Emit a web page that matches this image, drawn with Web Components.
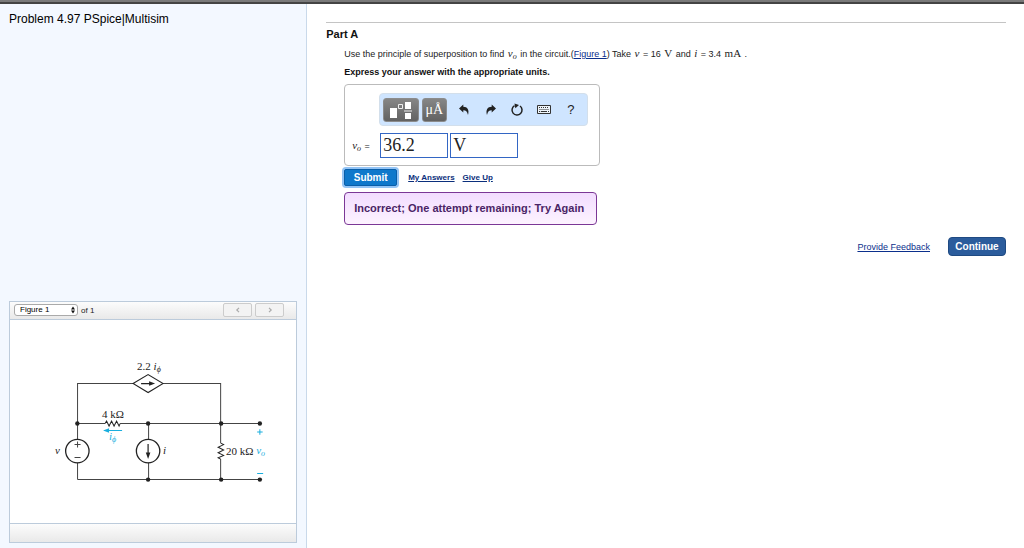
<!DOCTYPE html>
<html lang="en">
<head>
<meta charset="utf-8">
<title>Problem 4.97</title>
<style>
body { margin: 0; font-family: "Liberation Sans", Arial, sans-serif; font-size: 10px; color: #222; background: #fff; }
</style>
</head>
<body>
<problem-page></problem-page>

<template id="problem-page">
<style>
:host { display: flex; flex-direction: column; min-height: 100vh; box-sizing: border-box; border-top: 2px solid #7a7a7a; }
.rule { height: 2px; background: #444; }
.columns { flex: 1; display: flex; }
aside { flex: 0 0 30%; box-sizing: border-box; display: flex; flex-direction: column; justify-content: space-between; gap: 24px; padding: 8px 9px 5px; background: #f3f8ff; border-right: 1px solid #c9d9ea; }
h1 { margin: 0; font-size: 12px; line-height: 15px; font-weight: normal; color: #000; }
main { flex: 1; min-width: 0; padding: 18px 18px 0 19px; }
</style>
<div class="rule"></div>
<div class="columns">
  <aside>
    <h1>Problem 4.97 PSpice|Multisim</h1>
    <figure-viewer><circuit-diagram></circuit-diagram></figure-viewer>
  </aside>
  <main>
    <problem-part heading="Part A">
      <answer-box slot="answer"></answer-box>
      <answer-actions slot="answer"></answer-actions>
      <feedback-message slot="answer">Incorrect; One attempt remaining; Try Again</feedback-message>
    </problem-part>
    <page-footer></page-footer>
  </main>
</div>
</template>

<template id="figure-viewer">
<style>
:host { display: block; border: 1px solid #bccbdb; background: #fff; }
.bar { display: flex; align-items: center; box-sizing: border-box; height: 18px; padding: 0 12px 0 4px; background: linear-gradient(#fcfcfc, #e9e9e9); border-bottom: 1px solid #bccbdb; color: #222; font-size: 8px; }
.foot { height: 18px; background: linear-gradient(#fcfcfc, #e9e9e9); border-top: 1px solid #bccbdb; }
.pick { position: relative; display: flex; margin-right: 3px; }
select { appearance: none; box-sizing: border-box; width: 64px; height: 12px; padding: 0 12px 0 5px; border: 1px solid #aaa; border-radius: 3px; background: #fff; color: #000; font: 8px/10px "Liberation Sans", Arial, sans-serif; }
.pick svg { position: absolute; right: 2px; top: 2px; pointer-events: none; }
label { flex: 1; }
button { box-sizing: border-box; width: 29px; height: 14px; margin-left: 3px; padding: 0; display: grid; place-items: center; border: 1px solid #ccc; border-radius: 2px; background: #f3f3f3; }
</style>
<div class="bar">
  <span class="pick">
    <select id="fig"><option>Figure 1</option></select>
    <svg width="6" height="8" viewBox="0 0 6 8"><path d="M1 3.4 3 .5 5 3.4zM1 4.6 3 7.5 5 4.6z" fill="#111"/></svg>
  </span>
  <label for="fig">of 1</label>
  <button aria-label="Previous figure"><svg width="6" height="6" viewBox="0 0 6 6"><path d="M4 .8 1.8 3 4 5.2" fill="none" stroke="#aaa" stroke-width="1.2"/></svg></button>
  <button aria-label="Next figure"><svg width="6" height="6" viewBox="0 0 6 6"><path d="M2 .8 4.2 3 2 5.2" fill="none" stroke="#aaa" stroke-width="1.2"/></svg></button>
</div>
<slot></slot>
<div class="foot"></div>
</template>

<template id="circuit-diagram">
<style>
:host { display: block; }
svg { display: block; width: 100%; height: auto; }
text { font-family: "Liberation Serif", serif; font-size: 11px; fill: #222; }
.i { font-style: italic; }
.c { fill: #19aede; }
.s { font-size: 8px; }
.w { fill: none; stroke: #444; stroke-width: 1; }
</style>
<svg viewBox="10 320 286 203" role="img" aria-label="Circuit diagram">
  <g class="w">
    <path d="M77.5 479.500V383.500H133M163 383.500H220.500V443M77.500 423.500H105M120 423.500H259.500M77.500 479.500H259.500M148.500 423.500V479.500M220.500 459V479.500"/>
    <path d="M133 383.500 148 374.500 163 383.500 148 392.500z" fill="#fff" stroke="#222"/>
    <path d="M105 423.500l1.500-2.500 2.500 5 2.500-5 2.500 5 2.500-5 2.500 5 1-2.500" stroke="#222"/>
    <path d="M220.500 443l3 1.500-5.500 2.700 5.500 2.700-5.500 2.700 5.500 2.700-5.500 2.400 2.500 1.300" stroke="#222"/>
    <circle cx="77.300" cy="451" r="11.700" fill="#fff" stroke="#222" stroke-width="1.300"/>
    <circle cx="148" cy="451" r="11.700" fill="#fff" stroke="#222" stroke-width="1.300"/>
    <path d="M141 383.500H152M148 444V455" stroke="#222" stroke-width="1.200"/>
    <path d="M74.500 444.500H80.500M77.500 441.500V447.500M74.500 457.500H80.500"/>
    <path d="M107 430.500H122M257 432H262.500M259.700 429.300V434.700M257 473.500H263" stroke="#19aede"/>
  </g>
  <path d="M155 383.500 149 381.200V385.800zM148 459 145.700 452.500H150.300z" fill="#222"/>
  <path d="M103 430.500 109 428.300V432.700z" fill="#19aede"/>
  <g fill="#222">
    <circle cx="77.300" cy="423.500" r="2.200"/><circle cx="148" cy="423.500" r="2.200"/><circle cx="221" cy="423.500" r="2.200"/><circle cx="259.700" cy="423.500" r="2.200"/>
    <circle cx="148" cy="479.500" r="2.200"/><circle cx="221" cy="479.500" r="2.200"/><circle cx="259.700" cy="479.500" r="2.200"/>
  </g>
  <text x="137" y="370">2.2 <tspan class="i">i</tspan><tspan class="i s" dy="2">ϕ</tspan></text>
  <text x="102" y="418">4 kΩ</text>
  <text x="109" y="440" class="i c">i<tspan class="s" dy="2">ϕ</tspan></text>
  <text x="55" y="454" class="i">v</text>
  <text x="163" y="454" class="i">i</text>
  <text x="226" y="455">20 kΩ</text>
  <text x="256" y="454" class="i c">v<tspan class="s" dy="2">o</tspan></text>
</svg>
</template>

<template id="problem-part">
<style>
:host { display: block; border-top: 1px solid #c4c4c4; padding-top: 4px; }
h2 { margin: 0; font-size: 11px; line-height: 14px; color: #111; }
.body { padding-left: 18px; }
p { margin: 0; font-size: 9px; line-height: 18px; }
p:first-child { padding-top: 4px; }
p.units { font-weight: bold; padding-bottom: 3px; color: #111; }
a { color: #0b2f8c; }
.m { margin: 0 1px; font-family: "Liberation Serif", serif; font-size: 11px; line-height: 1; }
sub { font-size: 8px; vertical-align: -2px; line-height: 1; }
</style>
<h2></h2>
<div class="body">
  <p>Use the principle of superposition to find <i class="m">v<sub>o</sub></i> in the circuit.(<a href="#figure">Figure 1</a>) Take <i class="m">v</i> = 16 <span class="m">V</span> and <i class="m">i</i> = 3.4 <span class="m">mA</span> .</p>
  <p class="units">Express your answer with the appropriate units.</p>
  <slot name="answer"></slot>
</div>
</template>

<template id="answer-box">
<style>
:host { display: block; box-sizing: border-box; width: 256px; max-width: 100%; padding: 8px 11px 7px 7px; border: 1px solid #bbb; border-radius: 4px; }
.tools { display: flex; align-items: center; box-sizing: border-box; height: 33px; margin-left: 27px; padding: 0 3px; border: 1px solid #d3dfeb; border-radius: 4px; background: #cfe5ff; }
button { padding: 0; border: 0; background: none; width: 27px; height: 24px; display: grid; place-items: center; color: #222; font: 13px "Liberation Sans", Arial, sans-serif; }
button.dark { box-sizing: border-box; border: 1px solid #8c8c8c; border-radius: 3px; background: linear-gradient(#868686, #626262); color: #fff; margin-right: 3px; }
button.tpl { width: 36px; }
button.unit { width: 25px; margin-right: 4px; font: 14px "Liberation Serif", serif; }
.row { display: flex; align-items: center; margin-top: 7px; }
label { width: 28px; font-size: 9px; }
.m { font-family: "Liberation Serif", serif; font-size: 11px; margin-right: 1px; }
sub { font-size: 8px; vertical-align: -2px; line-height: 1; }
input { box-sizing: border-box; width: 68px; height: 25px; margin: 0 2px 0 0; padding: 0 2px; border: 1px solid #3366c4; background: #fff; color: #222; font: 18px "Liberation Serif", serif; }
</style>
<div class="tools">
  <button class="dark tpl" aria-label="Templates"><svg width="24" height="20" viewBox="0 0 24 20"><path d="M1 8h7v10H1zM16 2h6v7h-6zM16 13h6v6h-6z" fill="#fff"/><path d="M9.500 4.500h4v4h-4zM15 11h8" fill="none" stroke="#eee"/></svg></button>
  <button class="dark unit">μÅ</button>
  <button aria-label="Undo"><svg width="12" height="12" viewBox="0 0 12 12"><path d="M1 4.500 5.300 .5v2.300C9.500 2.800 11.500 6 10 11 9.200 7.500 8 6.200 5.300 6.200V8.500z" fill="#222"/></svg></button>
  <button aria-label="Redo"><svg width="12" height="12" viewBox="0 0 12 12"><path d="M11 4.500 6.700 .5v2.300C2.500 2.800 .5 6 2 11 2.800 7.500 4 6.200 6.700 6.200V8.500z" fill="#222"/></svg></button>
  <button aria-label="Reset"><svg width="14" height="14" viewBox="0 0 14 14"><path d="M10 3A5 5 0 1 1 4.500 2.700" fill="none" stroke="#222" stroke-width="1.500"/><path d="M4.500.500 9 2 5.300 5.300z" fill="#222"/></svg></button>
  <button aria-label="Keyboard"><svg width="14" height="9" viewBox="0 0 14 9"><path d="M.500.500h13v8H.500z" fill="#eef4fa" stroke="#333"/><path d="M2 2.500h10M2.500 4.500h10" stroke="#333" stroke-dasharray="1 1"/><path d="M2 6.500h1.200M4 6.500h6M11 6.500h1" stroke="#333"/></svg></button>
  <button aria-label="Help">?</button>
</div>
<div class="row">
  <label for="value"><i class="m">v<sub>o</sub></i> =</label>
  <input id="value" value="36.2">
  <input aria-label="Units" value="V">
</div>
</template>

<template id="answer-actions">
<style>
:host { display: flex; align-items: center; height: 22px; gap: 8px; }
button { box-sizing: border-box; width: 53px; height: 17px; margin-right: 3px; padding: 0; border: 1px solid #0a5ea8; border-radius: 2px; background: #0f78cb; box-shadow: 0 0 0 2px #94c4f5; color: #fff; font: bold 10px "Liberation Sans", Arial, sans-serif; }
a { color: #0b2f7c; font-size: 8px; font-weight: bold; }
</style>
<button>Submit</button>
<a href="#answers">My Answers</a>
<a href="#giveup">Give Up</a>
</template>

<template id="feedback-message">
<style>
:host { display: block; box-sizing: border-box; width: 253px; max-width: 100%; margin-top: 4px; padding: 8px 9px; border: 1px solid #7b3796; border-radius: 4px; background: linear-gradient(#f2dcff, #fdf3ff); color: #4a2466; font-size: 11px; line-height: 15px; font-weight: bold; white-space: nowrap; }
</style>
<slot></slot>
</template>

<template id="page-footer">
<style>
:host { display: flex; justify-content: flex-end; align-items: center; gap: 18px; margin-top: 12px; }
a { color: #0b2f8c; font-size: 9px; }
button { box-sizing: border-box; width: 58px; height: 19px; padding: 0; border: 1px solid #1f4a82; border-radius: 4px; background: #2b5c9c; color: #fff; font: bold 10px "Liberation Sans", Arial, sans-serif; }
</style>
<a href="#feedback">Provide Feedback</a>
<button>Continue</button>
</template>

<script>
const define = (name, setup) => customElements.define(name, class extends HTMLElement {
  constructor() {
    super();
    this.attachShadow({ mode: 'open' }).append(document.getElementById(name).content.cloneNode(true));
  }
  connectedCallback() { if (setup) setup(this); }
});
define('circuit-diagram');
define('figure-viewer');
define('answer-box');
define('answer-actions');
define('feedback-message');
define('page-footer');
define('problem-part', el => { el.shadowRoot.querySelector('h2').textContent = el.getAttribute('heading'); });
define('problem-page');
</script>
</body>
</html>
